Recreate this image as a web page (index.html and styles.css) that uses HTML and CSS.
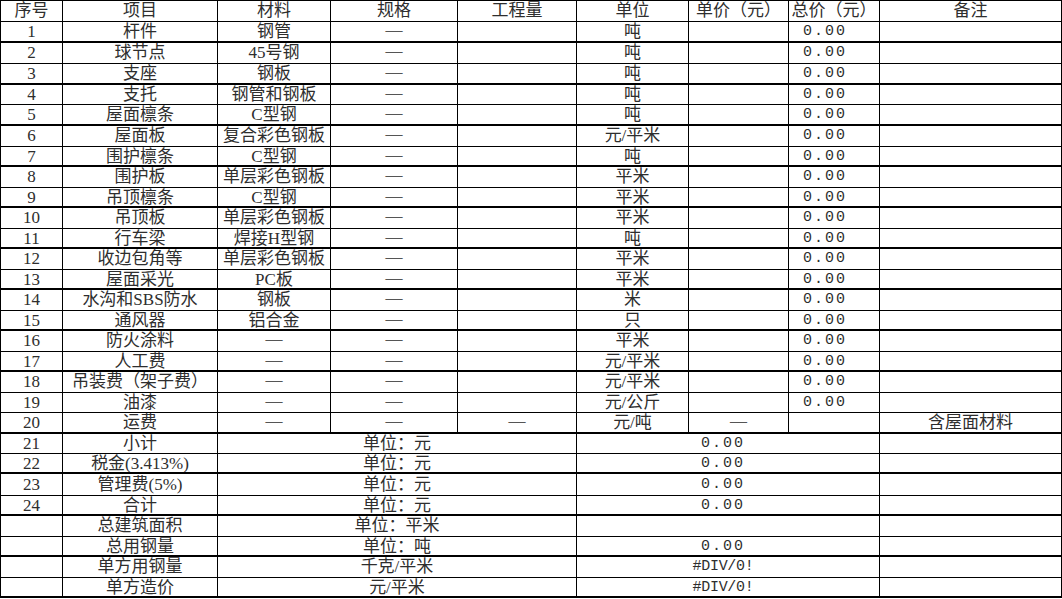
FILE: index.html
```html
<!DOCTYPE html>
<html lang="zh-CN">
<head>
<meta charset="utf-8">
<title>钢结构工程报价表</title>
<link rel="stylesheet" href="styles.css">
</head>
<body>
<div class="sheet">
  <div class="c">序号</div><div class="c">项目</div><div class="c">材料</div><div class="c">规格</div><div class="c">工程量</div><div class="c">单位</div><div class="c">单价（元）</div><div class="c">总价（元）</div><div class="c">备注</div>

  <div class="c t">1</div><div class="c t">杆件</div><div class="c t">钢管</div><div class="c t d">—</div><div class="c t"></div><div class="c t">吨</div><div class="c t"></div><div class="c t n">0.00</div><div class="c t"></div>
  <div class="c">2</div><div class="c">球节点</div><div class="c">45号钢</div><div class="c d">—</div><div class="c"></div><div class="c">吨</div><div class="c"></div><div class="c n">0.00</div><div class="c"></div>
  <div class="c t">3</div><div class="c t">支座</div><div class="c t">钢板</div><div class="c t d">—</div><div class="c t"></div><div class="c t">吨</div><div class="c t"></div><div class="c t n">0.00</div><div class="c t"></div>
  <div class="c">4</div><div class="c">支托</div><div class="c">钢管和钢板</div><div class="c d">—</div><div class="c"></div><div class="c">吨</div><div class="c"></div><div class="c n">0.00</div><div class="c"></div>
  <div class="c t">5</div><div class="c t">屋面檩条</div><div class="c t">C型钢</div><div class="c t d">—</div><div class="c t"></div><div class="c t">吨</div><div class="c t"></div><div class="c t n">0.00</div><div class="c t"></div>
  <div class="c">6</div><div class="c">屋面板</div><div class="c">复合彩色钢板</div><div class="c d">—</div><div class="c"></div><div class="c">元/平米</div><div class="c"></div><div class="c n">0.00</div><div class="c"></div>
  <div class="c t">7</div><div class="c t">围护檩条</div><div class="c t">C型钢</div><div class="c t d">—</div><div class="c t"></div><div class="c t">吨</div><div class="c t"></div><div class="c t n">0.00</div><div class="c t"></div>
  <div class="c">8</div><div class="c">围护板</div><div class="c">单层彩色钢板</div><div class="c d">—</div><div class="c"></div><div class="c">平米</div><div class="c"></div><div class="c n">0.00</div><div class="c"></div>
  <div class="c t">9</div><div class="c t">吊顶檩条</div><div class="c t">C型钢</div><div class="c t d">—</div><div class="c t"></div><div class="c t">平米</div><div class="c t"></div><div class="c t n">0.00</div><div class="c t"></div>
  <div class="c">10</div><div class="c">吊顶板</div><div class="c">单层彩色钢板</div><div class="c d">—</div><div class="c"></div><div class="c">平米</div><div class="c"></div><div class="c n">0.00</div><div class="c"></div>
  <div class="c t">11</div><div class="c t">行车梁</div><div class="c t">焊接H型钢</div><div class="c t d">—</div><div class="c t"></div><div class="c t">吨</div><div class="c t"></div><div class="c t n">0.00</div><div class="c t"></div>
  <div class="c">12</div><div class="c">收边包角等</div><div class="c">单层彩色钢板</div><div class="c d">—</div><div class="c"></div><div class="c">平米</div><div class="c"></div><div class="c n">0.00</div><div class="c"></div>
  <div class="c t">13</div><div class="c t">屋面采光</div><div class="c t">PC板</div><div class="c t d">—</div><div class="c t"></div><div class="c t">平米</div><div class="c t"></div><div class="c t n">0.00</div><div class="c t"></div>
  <div class="c">14</div><div class="c">水沟和SBS防水</div><div class="c">钢板</div><div class="c d">—</div><div class="c"></div><div class="c">米</div><div class="c"></div><div class="c n">0.00</div><div class="c"></div>
  <div class="c t">15</div><div class="c t">通风器</div><div class="c t">铝合金</div><div class="c t d">—</div><div class="c t"></div><div class="c t">只</div><div class="c t"></div><div class="c t n">0.00</div><div class="c t"></div>
  <div class="c">16</div><div class="c">防火涂料</div><div class="c d">—</div><div class="c d">—</div><div class="c"></div><div class="c">平米</div><div class="c"></div><div class="c n">0.00</div><div class="c"></div>
  <div class="c t">17</div><div class="c t">人工费</div><div class="c t d">—</div><div class="c t d">—</div><div class="c t"></div><div class="c t">元/平米</div><div class="c t"></div><div class="c t n">0.00</div><div class="c t"></div>
  <div class="c">18</div><div class="c">吊装费（架子费）</div><div class="c d">—</div><div class="c d">—</div><div class="c"></div><div class="c">元/平米</div><div class="c"></div><div class="c n">0.00</div><div class="c"></div>
  <div class="c">19</div><div class="c">油漆</div><div class="c d">—</div><div class="c d">—</div><div class="c"></div><div class="c">元/公斤</div><div class="c"></div><div class="c n">0.00</div><div class="c"></div>
  <div class="c t">20</div><div class="c t">运费</div><div class="c t d">—</div><div class="c t d">—</div><div class="c t d">—</div><div class="c t">元/吨</div><div class="c t d">—</div><div class="c t"></div><div class="c t">含屋面材料</div>

  <div class="c">21</div><div class="c">小计</div><div class="c s3">单位：元</div><div class="c s3 m">0.00</div><div class="c"></div>
  <div class="c t">22</div><div class="c t">税金(3.413%)</div><div class="c t s3">单位：元</div><div class="c t s3 m">0.00</div><div class="c t"></div>
  <div class="c">23</div><div class="c">管理费(5%)</div><div class="c s3">单位：元</div><div class="c s3 m">0.00</div><div class="c"></div>
  <div class="c t">24</div><div class="c t">合计</div><div class="c t s3">单位：元</div><div class="c t s3 m">0.00</div><div class="c t"></div>
  <div class="c"></div><div class="c">总建筑面积</div><div class="c s3">单位：平米</div><div class="c s3 m"></div><div class="c"></div>
  <div class="c t"></div><div class="c t">总用钢量</div><div class="c t s3">单位：吨</div><div class="c t s3 m">0.00</div><div class="c t"></div>
  <div class="c"></div><div class="c">单方用钢量</div><div class="c s3">千克/平米</div><div class="c s3 m e">#DIV/0!</div><div class="c"></div>
  <div class="c t"></div><div class="c t">单方造价</div><div class="c t s3">元/平米</div><div class="c t s3 m e">#DIV/0!</div><div class="c t"></div>
</div>
</body>
</html>
```

FILE: styles.css
```css
html, body {
  margin: 0;
  padding: 0;
  background: #fff;
}

.sheet {
  display: grid;
  grid-template-columns: 62px 155px 113px 127px 119px 112px 100px 91px 182px;
  grid-template-rows: 21px 21px 21px 21px 20px 21px 21px 20px 21px 20px 21px 20px 21px 20px 21px 20px 21px 20px 21px 20px 21px 20px 20px 22px 20px 21px 20px 21px 20px;
  width: 1062px;
  border-top: 1px solid #000;
  border-left: 1px solid #000;
  box-sizing: border-box;
  font-family: "Liberation Serif", "Noto Sans CJK SC", serif;
  font-size: 17px;
  color: #2e2e2e;
}

.c {
  box-sizing: border-box;
  border-right: 1px solid #000;
  border-bottom: 1px solid #000;
  display: flex;
  align-items: center;
  justify-content: center;
  line-height: 1;
  white-space: nowrap;
  overflow: hidden;
  padding-bottom: 1px;
}

.t {
  border-bottom-width: 2px;
  padding-bottom: 0;
}

.d {
  color: #555;
  font-family: "Liberation Serif", serif;
  font-size: 17px;
  line-height: 12px;
  overflow: visible;
  padding-bottom: 4px;
}

.t.d {
  padding-bottom: 3px;
}

.n {
  font-family: "Liberation Mono", monospace;
  font-size: 15px;
  letter-spacing: 2px;
  padding-right: 18px;
}

.s3 {
  grid-column: span 3;
}

.m {
  font-family: "Liberation Mono", monospace;
  font-size: 15px;
  letter-spacing: 2px;
  padding-right: 10px;
}

.e {
  letter-spacing: -0.3px;
  font-size: 15px;
}
```
